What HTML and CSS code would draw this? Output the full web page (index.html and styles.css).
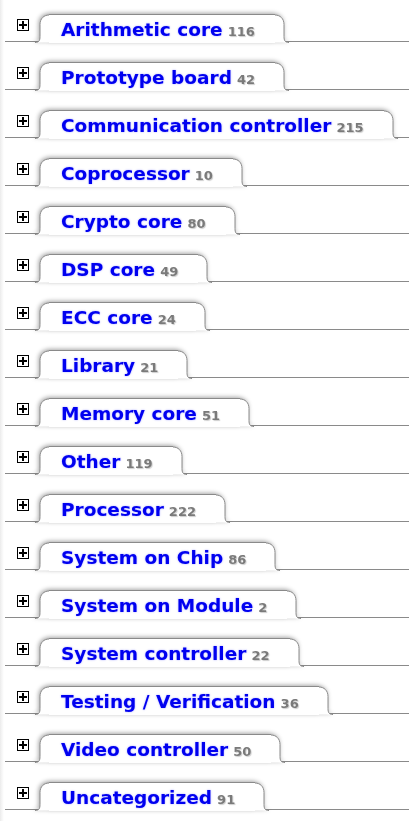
FILE: index.html
```html
<!DOCTYPE html>
<html>
<head>
<meta charset="utf-8">
<link rel="stylesheet" href="styles.css">
</head>
<body>
<div class="list">
  <div class="row"><span class="plus"></span><span class="tab"><svg class="cap" viewBox="0 0 14 28"><path d="M0,28 C4,28 5,26 5,22 L5,10 C5,4 9,0.5 14,0.5 L14,28 Z" fill="#fff"/><path d="M0,28 C4,28 5,26 5,22 L5,10 C5,4 9,0.5 14,0.5" fill="none" stroke="#8a8a8a"/></svg><span class="mid"><a class="name">Arithmetic core</a> <span class="count">116</span></span><svg class="cap" viewBox="0 0 14 28"><path d="M0,0.5 C5,0.5 9,4 9,10 L9,22 C9,26 10,28 14,28 L0,28 Z" fill="#fff"/><path d="M0,0.5 C5,0.5 9,4 9,10 L9,22 C9,26 10,28 14,28" fill="none" stroke="#8a8a8a"/></svg></span></div>
  <div class="row"><span class="plus"></span><span class="tab"><svg class="cap" viewBox="0 0 14 28"><path d="M0,28 C4,28 5,26 5,22 L5,10 C5,4 9,0.5 14,0.5 L14,28 Z" fill="#fff"/><path d="M0,28 C4,28 5,26 5,22 L5,10 C5,4 9,0.5 14,0.5" fill="none" stroke="#8a8a8a"/></svg><span class="mid"><a class="name">Prototype board</a> <span class="count">42</span></span><svg class="cap" viewBox="0 0 14 28"><path d="M0,0.5 C5,0.5 9,4 9,10 L9,22 C9,26 10,28 14,28 L0,28 Z" fill="#fff"/><path d="M0,0.5 C5,0.5 9,4 9,10 L9,22 C9,26 10,28 14,28" fill="none" stroke="#8a8a8a"/></svg></span></div>
  <div class="row"><span class="plus"></span><span class="tab"><svg class="cap" viewBox="0 0 14 28"><path d="M0,28 C4,28 5,26 5,22 L5,10 C5,4 9,0.5 14,0.5 L14,28 Z" fill="#fff"/><path d="M0,28 C4,28 5,26 5,22 L5,10 C5,4 9,0.5 14,0.5" fill="none" stroke="#8a8a8a"/></svg><span class="mid"><a class="name">Communication controller</a> <span class="count">215</span></span><svg class="cap" viewBox="0 0 14 28"><path d="M0,0.5 C5,0.5 9,4 9,10 L9,22 C9,26 10,28 14,28 L0,28 Z" fill="#fff"/><path d="M0,0.5 C5,0.5 9,4 9,10 L9,22 C9,26 10,28 14,28" fill="none" stroke="#8a8a8a"/></svg></span></div>
  <div class="row"><span class="plus"></span><span class="tab"><svg class="cap" viewBox="0 0 14 28"><path d="M0,28 C4,28 5,26 5,22 L5,10 C5,4 9,0.5 14,0.5 L14,28 Z" fill="#fff"/><path d="M0,28 C4,28 5,26 5,22 L5,10 C5,4 9,0.5 14,0.5" fill="none" stroke="#8a8a8a"/></svg><span class="mid"><a class="name">Coprocessor</a> <span class="count">10</span></span><svg class="cap" viewBox="0 0 14 28"><path d="M0,0.5 C5,0.5 9,4 9,10 L9,22 C9,26 10,28 14,28 L0,28 Z" fill="#fff"/><path d="M0,0.5 C5,0.5 9,4 9,10 L9,22 C9,26 10,28 14,28" fill="none" stroke="#8a8a8a"/></svg></span></div>
  <div class="row"><span class="plus"></span><span class="tab"><svg class="cap" viewBox="0 0 14 28"><path d="M0,28 C4,28 5,26 5,22 L5,10 C5,4 9,0.5 14,0.5 L14,28 Z" fill="#fff"/><path d="M0,28 C4,28 5,26 5,22 L5,10 C5,4 9,0.5 14,0.5" fill="none" stroke="#8a8a8a"/></svg><span class="mid"><a class="name">Crypto core</a> <span class="count">80</span></span><svg class="cap" viewBox="0 0 14 28"><path d="M0,0.5 C5,0.5 9,4 9,10 L9,22 C9,26 10,28 14,28 L0,28 Z" fill="#fff"/><path d="M0,0.5 C5,0.5 9,4 9,10 L9,22 C9,26 10,28 14,28" fill="none" stroke="#8a8a8a"/></svg></span></div>
  <div class="row"><span class="plus"></span><span class="tab"><svg class="cap" viewBox="0 0 14 28"><path d="M0,28 C4,28 5,26 5,22 L5,10 C5,4 9,0.5 14,0.5 L14,28 Z" fill="#fff"/><path d="M0,28 C4,28 5,26 5,22 L5,10 C5,4 9,0.5 14,0.5" fill="none" stroke="#8a8a8a"/></svg><span class="mid"><a class="name">DSP core</a> <span class="count">49</span></span><svg class="cap" viewBox="0 0 14 28"><path d="M0,0.5 C5,0.5 9,4 9,10 L9,22 C9,26 10,28 14,28 L0,28 Z" fill="#fff"/><path d="M0,0.5 C5,0.5 9,4 9,10 L9,22 C9,26 10,28 14,28" fill="none" stroke="#8a8a8a"/></svg></span></div>
  <div class="row"><span class="plus"></span><span class="tab"><svg class="cap" viewBox="0 0 14 28"><path d="M0,28 C4,28 5,26 5,22 L5,10 C5,4 9,0.5 14,0.5 L14,28 Z" fill="#fff"/><path d="M0,28 C4,28 5,26 5,22 L5,10 C5,4 9,0.5 14,0.5" fill="none" stroke="#8a8a8a"/></svg><span class="mid"><a class="name">ECC core</a> <span class="count">24</span></span><svg class="cap" viewBox="0 0 14 28"><path d="M0,0.5 C5,0.5 9,4 9,10 L9,22 C9,26 10,28 14,28 L0,28 Z" fill="#fff"/><path d="M0,0.5 C5,0.5 9,4 9,10 L9,22 C9,26 10,28 14,28" fill="none" stroke="#8a8a8a"/></svg></span></div>
  <div class="row"><span class="plus"></span><span class="tab"><svg class="cap" viewBox="0 0 14 28"><path d="M0,28 C4,28 5,26 5,22 L5,10 C5,4 9,0.5 14,0.5 L14,28 Z" fill="#fff"/><path d="M0,28 C4,28 5,26 5,22 L5,10 C5,4 9,0.5 14,0.5" fill="none" stroke="#8a8a8a"/></svg><span class="mid"><a class="name">Library</a> <span class="count">21</span></span><svg class="cap" viewBox="0 0 14 28"><path d="M0,0.5 C5,0.5 9,4 9,10 L9,22 C9,26 10,28 14,28 L0,28 Z" fill="#fff"/><path d="M0,0.5 C5,0.5 9,4 9,10 L9,22 C9,26 10,28 14,28" fill="none" stroke="#8a8a8a"/></svg></span></div>
  <div class="row"><span class="plus"></span><span class="tab"><svg class="cap" viewBox="0 0 14 28"><path d="M0,28 C4,28 5,26 5,22 L5,10 C5,4 9,0.5 14,0.5 L14,28 Z" fill="#fff"/><path d="M0,28 C4,28 5,26 5,22 L5,10 C5,4 9,0.5 14,0.5" fill="none" stroke="#8a8a8a"/></svg><span class="mid"><a class="name">Memory core</a> <span class="count">51</span></span><svg class="cap" viewBox="0 0 14 28"><path d="M0,0.5 C5,0.5 9,4 9,10 L9,22 C9,26 10,28 14,28 L0,28 Z" fill="#fff"/><path d="M0,0.5 C5,0.5 9,4 9,10 L9,22 C9,26 10,28 14,28" fill="none" stroke="#8a8a8a"/></svg></span></div>
  <div class="row"><span class="plus"></span><span class="tab"><svg class="cap" viewBox="0 0 14 28"><path d="M0,28 C4,28 5,26 5,22 L5,10 C5,4 9,0.5 14,0.5 L14,28 Z" fill="#fff"/><path d="M0,28 C4,28 5,26 5,22 L5,10 C5,4 9,0.5 14,0.5" fill="none" stroke="#8a8a8a"/></svg><span class="mid"><a class="name">Other</a> <span class="count">119</span></span><svg class="cap" viewBox="0 0 14 28"><path d="M0,0.5 C5,0.5 9,4 9,10 L9,22 C9,26 10,28 14,28 L0,28 Z" fill="#fff"/><path d="M0,0.5 C5,0.5 9,4 9,10 L9,22 C9,26 10,28 14,28" fill="none" stroke="#8a8a8a"/></svg></span></div>
  <div class="row"><span class="plus"></span><span class="tab"><svg class="cap" viewBox="0 0 14 28"><path d="M0,28 C4,28 5,26 5,22 L5,10 C5,4 9,0.5 14,0.5 L14,28 Z" fill="#fff"/><path d="M0,28 C4,28 5,26 5,22 L5,10 C5,4 9,0.5 14,0.5" fill="none" stroke="#8a8a8a"/></svg><span class="mid"><a class="name">Processor</a> <span class="count">222</span></span><svg class="cap" viewBox="0 0 14 28"><path d="M0,0.5 C5,0.5 9,4 9,10 L9,22 C9,26 10,28 14,28 L0,28 Z" fill="#fff"/><path d="M0,0.5 C5,0.5 9,4 9,10 L9,22 C9,26 10,28 14,28" fill="none" stroke="#8a8a8a"/></svg></span></div>
  <div class="row"><span class="plus"></span><span class="tab"><svg class="cap" viewBox="0 0 14 28"><path d="M0,28 C4,28 5,26 5,22 L5,10 C5,4 9,0.5 14,0.5 L14,28 Z" fill="#fff"/><path d="M0,28 C4,28 5,26 5,22 L5,10 C5,4 9,0.5 14,0.5" fill="none" stroke="#8a8a8a"/></svg><span class="mid"><a class="name">System on Chip</a> <span class="count">86</span></span><svg class="cap" viewBox="0 0 14 28"><path d="M0,0.5 C5,0.5 9,4 9,10 L9,22 C9,26 10,28 14,28 L0,28 Z" fill="#fff"/><path d="M0,0.5 C5,0.5 9,4 9,10 L9,22 C9,26 10,28 14,28" fill="none" stroke="#8a8a8a"/></svg></span></div>
  <div class="row"><span class="plus"></span><span class="tab"><svg class="cap" viewBox="0 0 14 28"><path d="M0,28 C4,28 5,26 5,22 L5,10 C5,4 9,0.5 14,0.5 L14,28 Z" fill="#fff"/><path d="M0,28 C4,28 5,26 5,22 L5,10 C5,4 9,0.5 14,0.5" fill="none" stroke="#8a8a8a"/></svg><span class="mid"><a class="name">System on Module</a> <span class="count">2</span></span><svg class="cap" viewBox="0 0 14 28"><path d="M0,0.5 C5,0.5 9,4 9,10 L9,22 C9,26 10,28 14,28 L0,28 Z" fill="#fff"/><path d="M0,0.5 C5,0.5 9,4 9,10 L9,22 C9,26 10,28 14,28" fill="none" stroke="#8a8a8a"/></svg></span></div>
  <div class="row"><span class="plus"></span><span class="tab"><svg class="cap" viewBox="0 0 14 28"><path d="M0,28 C4,28 5,26 5,22 L5,10 C5,4 9,0.5 14,0.5 L14,28 Z" fill="#fff"/><path d="M0,28 C4,28 5,26 5,22 L5,10 C5,4 9,0.5 14,0.5" fill="none" stroke="#8a8a8a"/></svg><span class="mid"><a class="name">System controller</a> <span class="count">22</span></span><svg class="cap" viewBox="0 0 14 28"><path d="M0,0.5 C5,0.5 9,4 9,10 L9,22 C9,26 10,28 14,28 L0,28 Z" fill="#fff"/><path d="M0,0.5 C5,0.5 9,4 9,10 L9,22 C9,26 10,28 14,28" fill="none" stroke="#8a8a8a"/></svg></span></div>
  <div class="row"><span class="plus"></span><span class="tab"><svg class="cap" viewBox="0 0 14 28"><path d="M0,28 C4,28 5,26 5,22 L5,10 C5,4 9,0.5 14,0.5 L14,28 Z" fill="#fff"/><path d="M0,28 C4,28 5,26 5,22 L5,10 C5,4 9,0.5 14,0.5" fill="none" stroke="#8a8a8a"/></svg><span class="mid"><a class="name">Testing / Verification</a> <span class="count">36</span></span><svg class="cap" viewBox="0 0 14 28"><path d="M0,0.5 C5,0.5 9,4 9,10 L9,22 C9,26 10,28 14,28 L0,28 Z" fill="#fff"/><path d="M0,0.5 C5,0.5 9,4 9,10 L9,22 C9,26 10,28 14,28" fill="none" stroke="#8a8a8a"/></svg></span></div>
  <div class="row"><span class="plus"></span><span class="tab"><svg class="cap" viewBox="0 0 14 28"><path d="M0,28 C4,28 5,26 5,22 L5,10 C5,4 9,0.5 14,0.5 L14,28 Z" fill="#fff"/><path d="M0,28 C4,28 5,26 5,22 L5,10 C5,4 9,0.5 14,0.5" fill="none" stroke="#8a8a8a"/></svg><span class="mid"><a class="name">Video controller</a> <span class="count">50</span></span><svg class="cap" viewBox="0 0 14 28"><path d="M0,0.5 C5,0.5 9,4 9,10 L9,22 C9,26 10,28 14,28 L0,28 Z" fill="#fff"/><path d="M0,0.5 C5,0.5 9,4 9,10 L9,22 C9,26 10,28 14,28" fill="none" stroke="#8a8a8a"/></svg></span></div>
  <div class="row"><span class="plus"></span><span class="tab"><svg class="cap" viewBox="0 0 14 28"><path d="M0,28 C4,28 5,26 5,22 L5,10 C5,4 9,0.5 14,0.5 L14,28 Z" fill="#fff"/><path d="M0,28 C4,28 5,26 5,22 L5,10 C5,4 9,0.5 14,0.5" fill="none" stroke="#8a8a8a"/></svg><span class="mid"><a class="name">Uncategorized</a> <span class="count">91</span></span><svg class="cap" viewBox="0 0 14 28"><path d="M0,0.5 C5,0.5 9,4 9,10 L9,22 C9,26 10,28 14,28 L0,28 Z" fill="#fff"/><path d="M0,0.5 C5,0.5 9,4 9,10 L9,22 C9,26 10,28 14,28" fill="none" stroke="#8a8a8a"/></svg></span></div>
</div>
</body>
</html>
```
FILE: styles.css
```css
html, body {
  margin: 0;
  padding: 0;
}
body {
  background: linear-gradient(to right, #ebebeb 0, #f6f6f6 2px, #fff 4px);
  font-family: "DejaVu Sans", Verdana, sans-serif;
  width: 409px;
  height: 821px;
  overflow: hidden;
}
.list {
  display: flex;
  flex-direction: column;
  gap: 6px;
  margin-left: 5px;
}
.row {
  display: flex;
  align-items: flex-end;
  height: 41px;
  border-bottom: 1px solid #8a8a8a;
}
.plus {
  position: relative;
  box-sizing: border-box;
  width: 12px;
  height: 12px;
  border: 1px solid #000;
  background: #fff;
  margin-left: 12px;
  margin-right: 6px;
  margin-bottom: 10px;
  flex: none;
}
.plus::before,
.plus::after {
  content: "";
  position: absolute;
  background: #000;
}
.plus::before {
  left: 1px;
  right: 1px;
  top: 4px;
  height: 2px;
}
.plus::after {
  top: 1px;
  bottom: 1px;
  left: 4px;
  width: 2px;
}
.tab {
  display: flex;
  align-items: stretch;
  height: 28px;
  margin-bottom: -1px;
  filter: drop-shadow(-1px -1px 2px rgba(0, 0, 0, 0.35));
}
.cap {
  display: block;
  width: 14px;
  height: 29px;
  flex: none;
}
.mid {
  display: block;
  box-sizing: border-box;
  height: 29px;
  background: #fff;
  border-top: 1px solid #8a8a8a;
  padding: 0 20px 0 12px;
  white-space: nowrap;
  line-height: 29px;
}
.name {
  color: #0000f0;
  font-weight: bold;
  font-size: 18.5px;
  text-shadow: 0 0 2px rgba(60, 60, 255, 0.45);
}
.count {
  color: #7a7a7a;
  font-weight: bold;
  font-size: 13px;
  text-shadow: 1px 1px 1px rgba(0, 0, 0, 0.2);
}
```
